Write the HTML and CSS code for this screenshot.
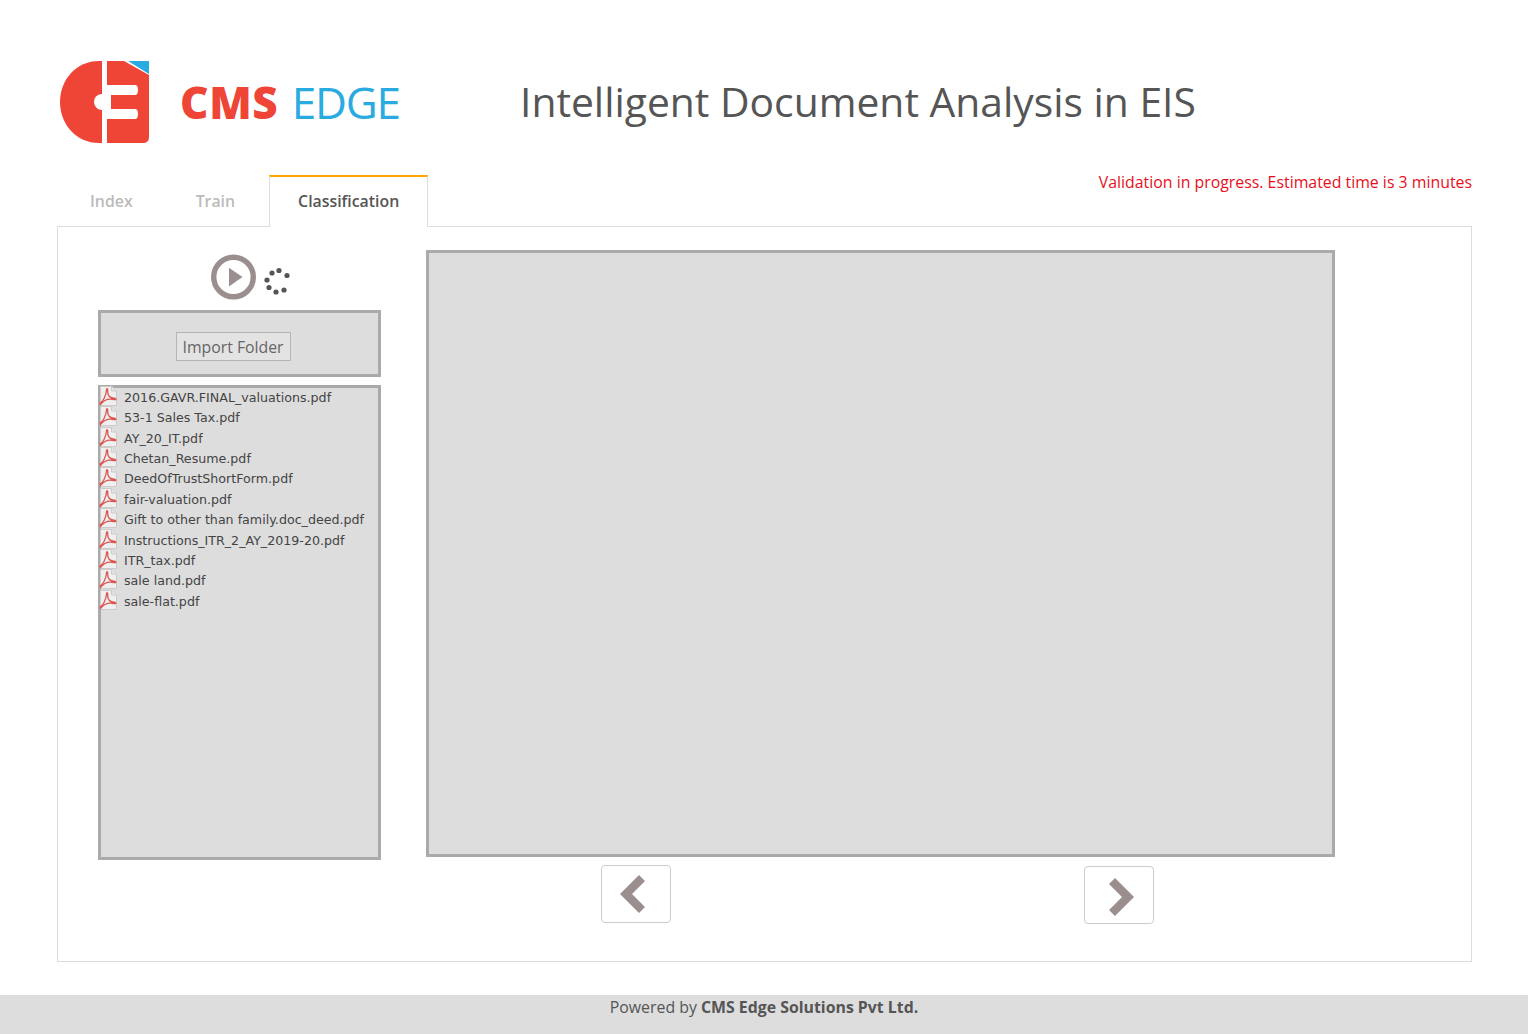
FILE: index.html
```html
<!DOCTYPE html>
<html lang="en">
<head>
<meta charset="utf-8">
<title>Intelligent Document Analysis in EIS</title>
<link rel="stylesheet" href="styles.css">
</head>
<body>
<svg class="defs" width="0" height="0" aria-hidden="true">
  <symbol id="pdf" viewBox="0 0 18 20">
    <path d="M1.5 .5H12.5L17.5 5V19.5H1.500Z" fill="#efefef" stroke="#cfcaca"/>
    <path d="M12.5 .5V5H17.5" fill="#e2e2e2" stroke="#cfcaca"/>
    <path d="M1 17C4 15.500 7 10 7.500 4C7.700 2 9 2.500 8.700 5C8.300 9 11 12 16 12.500C17.500 12.800 17 14 15 13.500C10 12.300 5 13.500 1.500 18.500Z" fill="none" stroke="#dd5550" stroke-width="1.300"/>
  </symbol>
</svg>
<header class="top">
  <div class="logo">
    <svg class="logo-mark" width="90" height="83" viewBox="60 61 90 83">
      <path d="M102 61V143H99C76 143 60 124 60 102C60 80 76 61 99 61Z" fill="#ee4536"/>
      <path d="M107 61H124L149 75V137Q149 143 143 143H107Z" fill="#ee4536"/>
      <path d="M128 61H149V74Z" fill="#29abe2"/>
      <path d="M107 85H135Q138 85 138 90T135 95H111V109H135Q138 109 138 114T135 119H107Z" fill="#fff"/>
      <circle cx="102" cy="102" r="8" fill="#fff"/>
      <rect x="102" y="98" width="9" height="8" fill="#fff"/>
    </svg>
    <div class="logo-text"><b>CMS</b> <span>EDGE</span></div>
  </div>
  <h1>Intelligent Document Analysis in EIS</h1>
</header>
<div class="tabbar">
  <nav class="tabs">
    <a class="tab">Index</a>
    <a class="tab train">Train</a>
    <a class="tab active">Classification</a>
  </nav>
  <p class="status">Validation in progress. Estimated time is 3 minutes</p>
</div>
<main class="panel">
  <section class="side">
    <div class="actions">
      <svg width="46" height="46" viewBox="0 0 46 46">
        <circle cx="22.500" cy="23" r="19.800" fill="#fff" stroke="#9b8e8e" stroke-width="5.400"/>
        <path d="M18 13.700L31.500 23L18 32.500Z" fill="#9b8e8e"/>
      </svg>
      <svg class="spinner" width="28" height="30" viewBox="0 0 28 30" fill="#555">
        <circle cx="9" cy="6" r="2.600"/><circle cx="16" cy="3.500" r="2.600"/><circle cx="24" cy="8.500" r="2.600"/>
        <circle cx="4" cy="13" r="2.600"/><circle cx="6" cy="20.500" r="2.600"/><circle cx="13" cy="25" r="2.600"/><circle cx="21" cy="23" r="2.600"/>
      </svg>
    </div>
    <div class="import"><button class="import-btn">Import Folder</button></div>
    <ul class="files">
      <li><svg><use href="#pdf"/></svg>2016.GAVR.FINAL_valuations.pdf</li>
      <li><svg><use href="#pdf"/></svg>53-1 Sales Tax.pdf</li>
      <li><svg><use href="#pdf"/></svg>AY_20_IT.pdf</li>
      <li><svg><use href="#pdf"/></svg>Chetan_Resume.pdf</li>
      <li><svg><use href="#pdf"/></svg>DeedOfTrustShortForm.pdf</li>
      <li><svg><use href="#pdf"/></svg>fair-valuation.pdf</li>
      <li><svg><use href="#pdf"/></svg>Gift to other than family.doc_deed.pdf</li>
      <li><svg><use href="#pdf"/></svg>Instructions_ITR_2_AY_2019-20.pdf</li>
      <li><svg><use href="#pdf"/></svg>ITR_tax.pdf</li>
      <li><svg><use href="#pdf"/></svg>sale land.pdf</li>
      <li><svg><use href="#pdf"/></svg>sale-flat.pdf</li>
    </ul>
  </section>
  <section class="viewer">
    <div class="page"></div>
    <div class="pager">
      <button class="nav">
        <svg width="28" height="38" viewBox="0 0 28 38"><path d="M20 0L26 6L13 19L26 32L20 38L1 19Z" fill="#9b8e8e"/></svg>
      </button>
      <button class="nav next">
        <svg width="28" height="38" viewBox="0 0 28 38"><path d="M8 0L2 6L15 19L2 32L8 38L27 19Z" fill="#9b8e8e"/></svg>
      </button>
    </div>
  </section>
</main>
<footer class="foot">Powered by <b>CMS Edge Solutions Pvt Ltd.</b></footer>
</body>
</html>
```

FILE: styles.css
```css
* { box-sizing: border-box; }
html, body { margin: 0; padding: 0; }
body {
  height: 1034px;
  overflow: hidden;
  background: #fff;
  font-family: "Open Sans", sans-serif;
  color: #555;
  display: flex;
  flex-direction: column;
}
.defs { position: absolute; }

.top {
  height: 175px;
  padding: 61px 0 0 60px;
  display: flex;
  align-items: flex-start;
}
.logo { width: 460px; display: flex; align-items: center; gap: 30px; height: 83px; }
.logo-mark { display: block; flex: none; }
.logo-text {
  font-size: 44px;
  line-height: 83px;
  white-space: nowrap;
  margin-top: -1px;
  word-spacing: -6px;
}
.logo-text b { color: #ee4536; font-weight: 800; letter-spacing: 0.600px; }
.logo-text span { color: #29abe2; font-weight: 400; letter-spacing: -1.200px; margin-left: 8px; }
h1 {
  margin: -2px 0 0;
  font-size: 40.800px;
  font-weight: 400;
  line-height: 84px;
  color: #555;
  white-space: nowrap;
}

.tabbar {
  height: 52px;
  margin: 0 56px 0 57px;
  padding-left: 5px;
  display: flex;
  justify-content: space-between;
  position: relative;
  z-index: 1;
}
.tabs { display: flex; gap: 6px; }
.tab {
  height: 52px;
  font-size: 15.850px;
  line-height: 48px;
  color: #bbb;
  font-weight: 600;
  border: solid transparent;
  border-width: 2px 1px 0;
  padding: 0 27px;
}
.tab.train { margin-left: 1px; }
.tab.active {
  border-color: #ffa500 #ddd #fff;
  background: #fff;
  color: #555;
  padding: 0 28px;
}
.status {
  margin: -4px 0 0;
  font-size: 15.870px;
  line-height: 22px;
  color: #e8101c;
  white-space: nowrap;
}

.panel {
  height: 736px;
  margin: -1px 56px 0 57px;
  border: 1px solid #ddd;
  display: flex;
  padding: 23px 0 0 40px;
  gap: 45px;
}
.side { width: 283px; flex: none; }
.actions {
  height: 60px;
  display: flex;
  align-items: flex-start;
  padding: 4px 0 0 113px;
  gap: 6px;
}
.spinner { margin-top: 13px; }
.import {
  height: 67px;
  background: #ddd;
  border: 3px solid #aaa;
  display: flex;
  justify-content: center;
  padding-top: 19px;
}
.import-btn {
  height: 29px;
  width: 115px;
  padding: 0;
  font-family: "Open Sans", sans-serif;
  font-size: 15.800px;
  color: #666;
  background: #e3e3e3;
  border: 1px solid #b5b5b5;
  margin-left: -13px;
}
.files {
  list-style: none;
  margin: 8px 0 0;
  height: 475px;
  padding: 0;
  background: #ddd;
  border: 3px solid #aaa;
  font-family: "DejaVu Sans", sans-serif;
  font-size: 12.650px;
  color: #444;
}
.files li {
  height: 20.360px;
  line-height: 20.360px;
  padding-left: 23px;
  position: relative;
  white-space: nowrap;
}
.files svg {
  position: absolute;
  left: -2px;
  top: -2px;
  width: 18px;
  height: 20px;
}

.viewer { width: 909px; flex: none; }
.page {
  height: 607px;
  background: #ddd;
  border: 3px solid #aaa;
}
.pager {
  display: flex;
  align-items: flex-start;
  gap: 413px;
  padding: 8px 0 0 175px;
}
.nav {
  width: 70px;
  height: 58px;
  padding: 0;
  background: #fff;
  border: 1px solid #ccc;
  border-radius: 4px;
  display: flex;
  align-items: center;
  justify-content: center;
}
.nav svg { display: block; margin: -1px 0 0 -7px; }
.nav.next { margin-top: 1px; }
.nav.next svg { margin: 3px 0 0 3px; }

.foot {
  margin-top: 33px;
  height: 39px;
  background: #ddd;
  text-align: center;
  font-size: 15.850px;
  line-height: 24px;
  color: #555;
}
```
